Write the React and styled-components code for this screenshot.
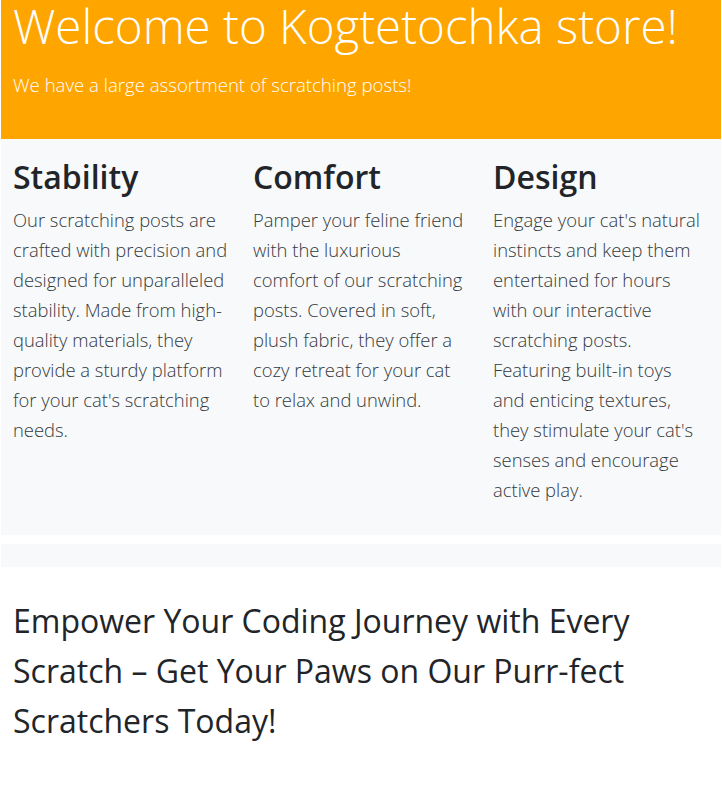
import React from 'react';
import styled, { createGlobalStyle } from 'styled-components';

const GlobalStyle = createGlobalStyle`
  body {
    margin: 0;
    font-family: "Open Sans", "Noto Sans", sans-serif;
    font-weight: 300;
    color: #212529;
    background: #fff;
  }
`;

const Page = styled.div`
  padding: 0 1px;
`;

const Hero = styled.header`
  background: #ffa500;
  color: #fff;
  padding: 0 12px;
  height: 139px;
  box-sizing: border-box;
  overflow: hidden;
`;

const Title = styled.h1`
  margin: 0;
  font-size: 47.5px;
  font-weight: 300;
  line-height: 52px;
`;

const Lead = styled.p`
  margin: 19px 0 0;
  font-size: 18.6px;
  font-weight: 300;
  line-height: 28px;
`;

const Features = styled.section`
  background: #f8f9fa;
  display: grid;
  grid-template-columns: repeat(3, 1fr);
  padding: 16px 0 30px;
`;

const Feature = styled.div`
  padding: 0 12px;
`;

const FeatureTitle = styled.h2`
  margin: 0 0 6px;
  font-size: 32px;
  font-weight: 600;
  line-height: 44px;
  color: #212529;
`;

const FeatureText = styled.p`
  margin: 0;
  font-size: 18.4px;
  line-height: 30px;
  color: #343a40;
`;

const Strip = styled.div`
  background: #f8f9fa;
  height: 23px;
  margin-top: 9px;
`;

const Slogan = styled.h3`
  margin: 0;
  padding: 29px 12px 0;
  font-size: 32px;
  font-weight: 400;
  line-height: 50px;
  color: #212529;
`;

// non-breaking spaces keep the line breaks the same as the original Segoe UI page
const features = [
  {
    title: 'Stability',
    text: "Our scratching posts are crafted with precision and designed for unparalleled stability. Made from high-quality materials, they provide a sturdy platform for your cat's scratching needs.",
  },
  {
    title: 'Comfort',
    text: 'Pamper your feline friend with the luxurious comfort of our scratching posts. Covered in soft, plush fabric, they offer a cozy retreat for your cat to relax and unwind.',
  },
  {
    title: 'Design',
    text: "Engage your cat's natural instincts and keep them entertained for hours with our interactive scratching posts. Featuring built-in toys and\u00a0enticing textures, they\u00a0stimulate your cat's senses and encourage active play.",
  },
];

export default function App() {
  return (
    <Page>
      <GlobalStyle />
      <Hero>
        <Title>Welcome to Kogtetochka store!</Title>
        <Lead>We have a large assortment of scratching posts!</Lead>
      </Hero>
      <Features>
        {features.map((f) => (
          <Feature key={f.title}>
            <FeatureTitle>{f.title}</FeatureTitle>
            <FeatureText>{f.text}</FeatureText>
          </Feature>
        ))}
      </Features>
      <Strip />
      <Slogan>
        Empower Your Coding Journey with Every Scratch – Get Your Paws on Our Purr-fect Scratchers Today!
      </Slogan>
    </Page>
  );
}
